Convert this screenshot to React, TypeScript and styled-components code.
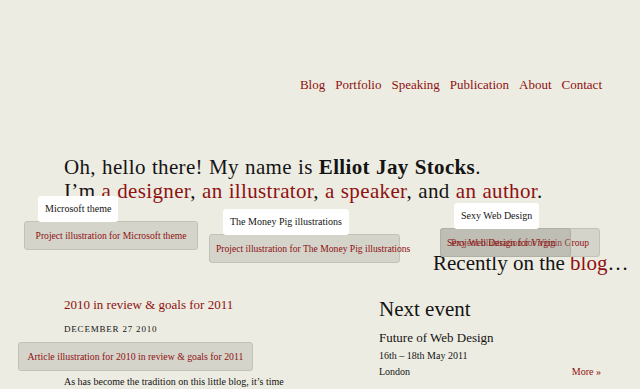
import React from "react";
import styled, { createGlobalStyle } from "styled-components";

const GlobalStyle = createGlobalStyle`
  * { box-sizing: border-box; }
  body {
    margin: 0;
    background: #edece2;
    font-family: "Liberation Serif", "Times New Roman", serif;
    color: #141414;
  }
`;

const red = "#8e1111";

const projects = [
  { title: "Microsoft theme", top: 18, left: 24, width: 174 },
  { title: "The Money Pig illustrations", top: 31, left: 11, width: 191 },
];

const App = () => {
  return (
    <>
      <GlobalStyle />
      <Header>
        <Nav>
          <NavLink href="#">Blog</NavLink>
          <NavLink href="#">Portfolio</NavLink>
          <NavLink href="#">Speaking</NavLink>
          <NavLink href="#">Publication</NavLink>
          <NavLink href="#">About</NavLink>
          <NavLink href="#">Contact</NavLink>
        </Nav>
      </Header>
      <Intro>
        Oh, hello there! My name is <strong>Elliot Jay Stocks</strong>.
        <br />
        I&rsquo;m <Red>a designer</Red>, <Red>an illustrator</Red>, <Red>a speaker</Red>, and{" "}
        <Red>an author</Red>.
      </Intro>
      <Showcase>
        {projects.map((p) => (
          <Project key={p.title} $top={p.top} $left={p.left}>
            <Placeholder $width={p.width}>Project illustration for {p.title}</Placeholder>
            <Tooltip>{p.title}</Tooltip>
          </Project>
        ))}
        <Project $top={25} $left={40}>
          <Placeholder $width={160}>
            Project illustration for Virgin Group
            <Overlay>Sexy Web Design for Virgin</Overlay>
          </Placeholder>
          <Tooltip>Sexy Web Design</Tooltip>
        </Project>
      </Showcase>
      <Recently>
        Recently on the <Red>blog</Red>&hellip;
      </Recently>
      <Columns>
        <Column>
          <PostTitle href="#">2010 in review &amp; goals for 2011</PostTitle>
          <PostDate>December 27 2010</PostDate>
          <ArticleImage>Article illustration for 2010 in review &amp; goals for 2011</ArticleImage>
          <Excerpt>As has become the tradition on this little blog, it&rsquo;s time</Excerpt>
        </Column>
        <Column>
          <EventHeading>Next event</EventHeading>
          <EventName>Future of Web Design</EventName>
          <EventMeta>16th &ndash; 18th May 2011</EventMeta>
          <EventRow>
            <EventMeta>London</EventMeta>
            <MoreLink href="#">More &raquo;</MoreLink>
          </EventRow>
        </Column>
      </Columns>
    </>
  );
};

const Header = styled.header`
  padding: 77px 38px 0 0;
  display: flex;
  justify-content: flex-end;
`;

const Nav = styled.nav`
  display: flex;
  gap: 10px;
`;

const NavLink = styled.a`
  color: ${red};
  text-decoration: none;
  font-size: 13px;
  line-height: 15px;
`;

const Intro = styled.h1`
  margin: 63px 0 0;
  padding-left: 64px;
  font-size: 21px;
  line-height: 24px;
  letter-spacing: 0.35px;
  word-spacing: 0.5px;
  font-weight: normal;
  white-space: nowrap;

  strong {
    font-weight: bold;
  }
`;

const Red = styled.span`
  color: ${red};
`;

const Showcase = styled.div`
  display: flex;
  align-items: flex-start;
  height: 49px;
`;

const Project = styled.div<{ $top: number; $left: number }>`
  position: relative;
  margin-top: ${(p) => p.$top}px;
  margin-left: ${(p) => p.$left}px;
  z-index: 1;
`;

const Placeholder = styled.div<{ $width: number }>`
  position: relative;
  width: ${(p) => p.$width}px;
  height: 29px;
  padding: 0 6px;
  background: #d5d4cb;
  border: 1px solid #c3c2b8;
  border-radius: 3px;
  color: ${red};
  font-size: 9.6px;
  line-height: 27px;
  text-align: center;
  white-space: nowrap;
`;

const Overlay = styled.div`
  position: absolute;
  top: -1px;
  left: -1px;
  width: 131px;
  height: 29px;
  padding-left: 6px;
  background: rgba(150, 148, 138, 0.35);
  border: 1px solid #b0afa5;
  border-radius: 3px;
  text-align: left;
  line-height: 27px;
`;

const Tooltip = styled.div`
  position: absolute;
  top: -25px;
  left: 14px;
  padding: 6px 7px;
  background: #fff;
  border-radius: 3px;
  color: #141414;
  font-size: 10px;
  line-height: 14px;
  white-space: nowrap;
`;

const Recently = styled.h2`
  position: relative;
  margin: 0;
  padding-left: 433px;
  font-size: 21px;
  line-height: 22px;
  font-weight: normal;
  white-space: nowrap;
`;

const Columns = styled.div`
  display: grid;
  grid-template-columns: 315px 222px;
  padding-left: 64px;
  margin-top: 23px;
`;

const Column = styled.div`
  display: flex;
  flex-direction: column;
  align-items: flex-start;
`;

const PostTitle = styled.a`
  color: ${red};
  text-decoration: none;
  font-size: 13px;
  line-height: 16px;
`;

const PostDate = styled.div`
  margin-top: 10px;
  font-size: 9px;
  line-height: 12px;
  letter-spacing: 0.8px;
  text-transform: uppercase;
`;

const ArticleImage = styled.div`
  margin: 7px 0 0 -46px;
  width: 235px;
  height: 29px;
  background: #d5d4cb;
  border: 1px solid #c3c2b8;
  border-radius: 3px;
  color: ${red};
  font-size: 9.8px;
  line-height: 27px;
  text-align: center;
  white-space: nowrap;
`;

const Excerpt = styled.p`
  margin: 5px 0 0;
  font-size: 10px;
  line-height: 12px;
  white-space: nowrap;
`;

const EventHeading = styled.h2`
  margin: 0;
  font-size: 21px;
  line-height: 24px;
  font-weight: normal;
`;

const EventName = styled.h3`
  margin: 9px 0 0;
  font-size: 13px;
  line-height: 16px;
  font-weight: normal;
`;

const EventMeta = styled.div`
  margin-top: 3px;
  font-size: 10px;
  line-height: 13px;
`;

const EventRow = styled.div`
  display: flex;
  justify-content: space-between;
  align-items: flex-end;
  align-self: stretch;
`;

const MoreLink = styled.a`
  color: ${red};
  text-decoration: none;
  font-size: 10px;
  line-height: 13px;
`;

export default App;
